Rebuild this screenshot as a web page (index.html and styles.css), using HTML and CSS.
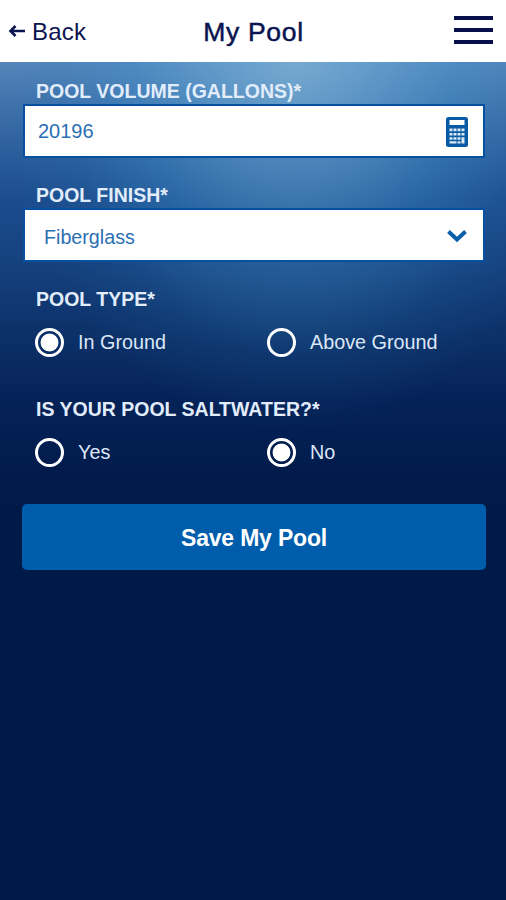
FILE: index.html
```html
<!DOCTYPE html>
<html lang="en">
<head>
<meta charset="utf-8">
<title>My Pool</title>
<link rel="stylesheet" href="styles.css">
</head>
<body>
<header class="bar">
  <a class="back"><svg class="arrow" width="18" height="14" viewBox="0 0 18 14"><path d="M17 7H3M7.500 2 2.500 7l5 5" fill="none" stroke="currentColor" stroke-width="2.600"/></svg>Back</a>
  <h1 class="title">My Pool</h1>
  <div class="menu"><span></span><span></span><span></span></div>
</header>
<main class="form">
  <label class="label">POOL VOLUME (GALLONS)*</label>
  <div class="field">
    <span class="value">20196</span>
    <svg class="calc" width="22" height="30" viewBox="0 0 22 30"><rect width="22" height="30" rx="2.500" fill="#075ba5"/><path fill="#fff" d="M3.500 3h15v5h-15z"/><path fill="#dbe9f5" d="M3.500 11.500h3v2.800h-3zm4 0h3v2.800h-3zm4 0h3v2.800h-3zm4 0h3v2.800h-3zM3.500 16h3v2.500h-3zm4 0h3v2.500h-3zm4 0h3v2.500h-3zm4 0h3v2.500h-3zM3.500 20.200h3v2.500h-3zm4 0h3v2.500h-3zm4 0h3v2.500h-3zm4 0h3v6.300h-3zM3.500 24.300h7v2.200h-7zm8 0h3v2.200h-3z"/></svg>
  </div>
  <label class="label">POOL FINISH*</label>
  <div class="field select">
    <span class="value">Fiberglass</span>
    <svg class="chevron" width="20" height="14" viewBox="0 0 20 14"><path d="m1.500 2.500 8.500 8 8.500-8" fill="none" stroke="#0a5fa9" stroke-width="4"/></svg>
  </div>
  <div class="label">POOL TYPE*</div>
  <div class="options">
    <div class="option"><i class="radio on"></i>In Ground</div>
    <div class="option"><i class="radio"></i>Above Ground</div>
  </div>
  <div class="label salt">IS YOUR POOL SALTWATER?*</div>
  <div class="options">
    <div class="option"><i class="radio"></i>Yes</div>
    <div class="option"><i class="radio on"></i>No</div>
  </div>
  <button class="save">Save My Pool</button>
</main>
</body>
</html>
```
FILE: styles.css
```css
* { box-sizing: border-box; }
body {
  margin: 0;
  height: 900px;
  overflow: hidden;
  display: flex;
  flex-direction: column;
  font-family: "Liberation Sans", Arial, sans-serif;
  background: #001a48;
}
.bar {
  flex: none;
  height: 62px;
  padding: 0 13px 0 8px;
  display: grid;
  grid-template-columns: 1fr auto 1fr;
  align-items: center;
  background: #fff;
  color: #0a1450;
}
.back { display: flex; align-items: center; gap: 6px; padding-top: 2px; font-size: 24px; letter-spacing: .2px; }
.arrow { margin-top: -3px; }
.title {
  margin: 2px -3px 0 3px;
  font-size: 26.5px;
  font-weight: 400;
  letter-spacing: .7px;
  -webkit-text-stroke: .5px currentColor;
}
.menu { justify-self: end; width: 39px; display: grid; gap: 8px; margin-top: -2px; }
.menu span { height: 4px; background: #07104a; }
.form {
  flex: 1;
  padding: 17px 21px 0 23px;
  background:
    radial-gradient(ellipse 290px 370px at 295px 0, rgba(140, 193, 224, .6), rgba(110, 175, 218, .48) 30%, rgba(68, 150, 205, .34) 55%, rgba(45, 125, 185, .13) 80%, rgba(40, 110, 170, 0)),
    linear-gradient(#5586ba 0, #4173ac 40px, #2b5e9c 90px, #1b4c8d 140px, #143f7c 210px, #0c3068 275px, #052257 340px, #011b4c 410px, #001a48 450px);
}
.label {
  display: block;
  height: 25px;
  padding-left: 13px;
  font-size: 19.5px;
  font-weight: 700;
  line-height: 25px;
  color: #e2edfb;
  white-space: nowrap;
}
.field {
  height: 54px;
  margin-bottom: 25px;
  padding: 1px 15px 0 13px;
  display: flex;
  align-items: center;
  justify-content: space-between;
  background: #fff;
  border: 2px solid #0650a1;
}
.value { font-size: 20px; color: #2c6fb3; }
.select .value { font-size: 19.700px; padding: 3px 0 0 6px; }
.select { padding-right: 16px; }
.calc { margin-top: 1px; }
.chevron { margin-top: 0; }
.options {
  height: 30px;
  margin-top: 15px;
  padding-left: 12px;
  display: grid;
  grid-template-columns: 232px 1fr;
  align-items: center;
}
.option { display: flex; align-items: center; gap: 14px; font-size: 19.800px; color: #dce7f7; }
.radio {
  width: 29px;
  height: 29px;
  border: 3px solid #fff;
  border-radius: 50%;
}
.radio.on { background: radial-gradient(circle, #fff 8.500px, transparent 9.300px); }
.salt { margin-top: 40px; }
.save {
  display: block;
  width: 464px;
  height: 66px;
  margin: 37px 0 0 -1px;
  padding: 2px 0 0;
  border: 0;
  border-radius: 5px;
  background: #005dab;
  color: #fff;
  font: 700 23px "Liberation Sans", Arial, sans-serif;
  letter-spacing: -.2px;
}
```
